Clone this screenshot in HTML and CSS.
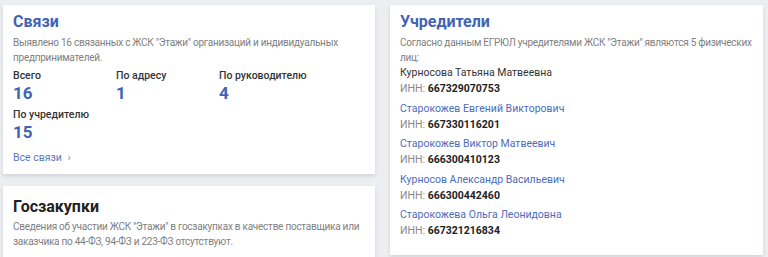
FILE: index.html
```html
<!DOCTYPE html>
<html lang="ru">
<head>
    <meta charset="UTF-8">
    <meta name="viewport" content="width=device-width, initial-scale=1.0">
    <title>ЖСК Этажи</title>
    <link rel="stylesheet" href="styles.css">
</head>
<body>

    <div class="layout">
        <div class="column">
            <div class="card">
                <h2 class="card-title link">Связи</h2>
                <p class="card-text">Выявлено 16 связанных с ЖСК "Этажи" организаций и индивидуальных предпринимателей.</p>

                <div class="stats">
                    <div class="stat">
                        <div class="stat-label">Всего</div>
                        <div class="stat-value">16</div>
                    </div>
                    <div class="stat">
                        <div class="stat-label">По адресу</div>
                        <div class="stat-value">1</div>
                    </div>
                    <div class="stat">
                        <div class="stat-label">По руководителю</div>
                        <div class="stat-value">4</div>
                    </div>
                    <div class="stat">
                        <div class="stat-label">По учредителю</div>
                        <div class="stat-value">15</div>
                    </div>
                </div>

                <a href="#" class="more-link">Все связи <span class="arrow">&rsaquo;</span></a>
            </div>

            <div class="card card-plain">
                <h2 class="card-title">Госзакупки</h2>
                <p class="card-text">Сведения об участии ЖСК "Этажи" в госзакупках в качестве поставщика или заказчика по 44-ФЗ, 94-ФЗ и 223-ФЗ отсутствуют.</p>
            </div>
        </div>

        <div class="card">
            <h2 class="card-title link">Учредители</h2>
            <p class="card-text">Согласно данным ЕГРЮЛ учредителями ЖСК "Этажи" являются 5 физических лиц:</p>

            <ul class="founders">
                <li>
                    <div class="founder-name">Курносова Татьяна Матвеевна</div>
                    <div class="inn">ИНН: <b>667329070753</b></div>
                </li>
                <li>
                    <a href="#" class="founder-name">Старокожев Евгений Викторович</a>
                    <div class="inn">ИНН: <b>667330116201</b></div>
                </li>
                <li>
                    <a href="#" class="founder-name">Старокожев Виктор Матвеевич</a>
                    <div class="inn">ИНН: <b>666300410123</b></div>
                </li>
                <li>
                    <a href="#" class="founder-name">Курносов Александр Васильевич</a>
                    <div class="inn">ИНН: <b>666300442460</b></div>
                </li>
                <li>
                    <a href="#" class="founder-name">Старокожева Ольга Леонидовна</a>
                    <div class="inn">ИНН: <b>667321216834</b></div>
                </li>
            </ul>
        </div>
    </div>

</body>
</html>
```

FILE: styles.css
```css
* {
    margin: 0;
    padding: 0;
    box-sizing: border-box;
}

body {
    background-color: #eceef1;
    font-family: Roboto, "Noto Sans", sans-serif;
    color: #333;
    padding: 5px 5px 0 3px;
}

.layout {
    display: grid;
    grid-template-columns: 372px 373px;
    gap: 15px;
    align-items: start;
}

.column {
    display: flex;
    flex-direction: column;
    gap: 12px;
}

.card {
    background-color: #fff;
    padding: 7px 10px 9px 10px;
    box-shadow: 0 2px 4px rgba(0, 0, 0, 0.12);
}

.card-plain {
    padding-top: 11px;
}

.card-title {
    font-size: 16px;
    font-weight: 700;
    color: #222;
    line-height: 20px;
    margin-bottom: 3px;
}

.card-title.link {
    color: #4163b4;
}

.card-plain .card-title {
    margin-bottom: 2px;
}

.card-text {
    font-size: 10px;
    letter-spacing: -0.25px;
    line-height: 15px;
    color: #808080;
}

.stats {
    display: grid;
    grid-template-columns: repeat(3, 103px);
    row-gap: 5px;
    margin-top: 4px;
}

.stat-label {
    font-size: 10.5px;
    font-weight: 500;
    color: #333;
    line-height: 14px;
}

.stat-value {
    font-size: 17px;
    font-weight: 700;
    color: #4163b4;
    line-height: 20px;
}

.more-link {
    display: block;
    margin-top: 9px;
    font-size: 10.5px;
    line-height: 14px;
    color: #5a77bf;
    text-decoration: none;
}

.arrow {
    margin-left: 3px;
    color: #7c8fbd;
}

.founders {
    list-style: none;
    padding-bottom: 3px;
}

.founders li {
    margin-bottom: 3.5px;
}

.founder-name {
    display: block;
    font-size: 10.5px;
    line-height: 16px;
    color: #333;
    text-decoration: none;
}

a.founder-name {
    color: #4d6cbb;
}

.inn {
    font-size: 10.5px;
    line-height: 16px;
    color: #888;
}

.inn b {
    font-size: 10.5px;
    font-weight: 700;
    color: #222;
}
```
